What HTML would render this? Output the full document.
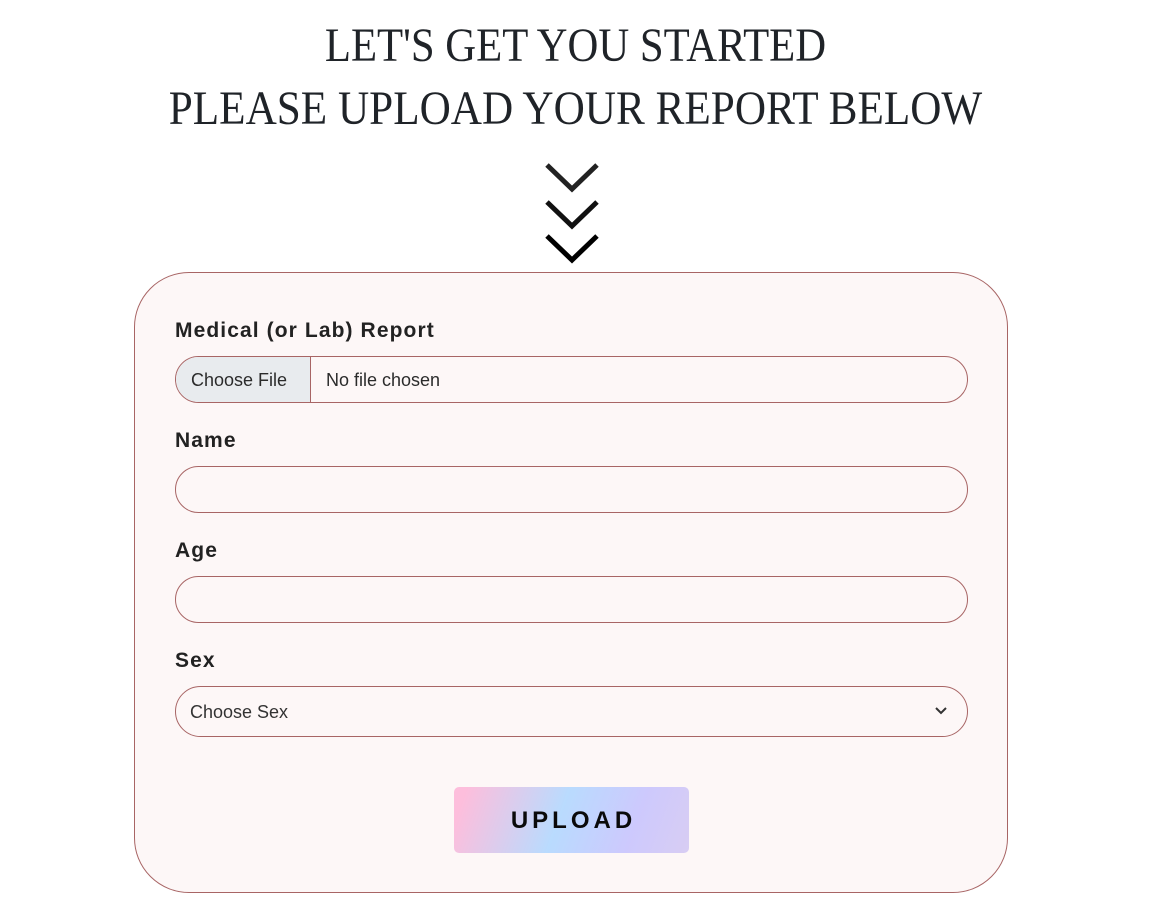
<!DOCTYPE html>
<html><head><style>
body{margin:0;background:#fff;width:1151px;height:912px;overflow:hidden;font-family:"Liberation Sans",sans-serif;position:relative}
.h{position:absolute;left:0;width:1151px;text-align:center;font-family:"Liberation Serif",serif;font-size:48px;color:#1f2328;white-space:nowrap;line-height:1}
.card{position:absolute;left:134px;top:272px;width:874px;height:621px;border:1px solid #a86565;border-radius:55px;background:#fdf7f7;box-sizing:border-box}
.lbl{position:absolute;left:175px;font-weight:bold;font-size:21px;color:#222;letter-spacing:1.1px}
.in{position:absolute;left:175px;width:793px;height:47px;border:1px solid #a86565;border-radius:24px;box-sizing:border-box;background:#fdf7f7}
.t{position:absolute;font-size:18px;color:#2b2b2b}
</style></head><body>
<div class="h" style="top:22px;transform:scaleX(0.89)">LET'S GET YOU STARTED</div>
<div class="h" style="top:85px;transform:scaleX(0.9)">PLEASE UPLOAD YOUR REPORT BELOW</div>
<svg style="position:absolute;left:544px;top:160px" width="56" height="108" viewBox="0 0 56 108">
<g fill="none" stroke-width="5"><path d="M3 5 L28 29 L53 5" stroke="#222"/><path d="M3 42 L28 66 L53 42" stroke="#111"/><path d="M3 76 L28 100 L53 76" stroke="#000"/></g></svg>
<div class="card"></div>
<div class="lbl" style="top:319px">Medical (or Lab) Report</div>
<div class="in" style="top:356px;overflow:hidden"><div style="position:absolute;left:0;top:0;width:134px;height:45px;background:#e8ebee;border-right:1px solid #a86565"></div></div>
<div class="t" style="left:191px;top:370px">Choose File</div>
<div class="t" style="left:326px;top:370px">No file chosen</div>
<div class="lbl" style="top:429px">Name</div>
<div class="in" style="top:466px"></div>
<div class="lbl" style="top:539px">Age</div>
<div class="in" style="top:576px"></div>
<div class="lbl" style="top:649px">Sex</div>
<div class="in" style="top:686px;height:51px;border-radius:26px"></div>
<div class="t" style="left:190px;top:702px;color:#333">Choose Sex</div>
<svg style="position:absolute;left:934px;top:706px" width="14" height="10"><path d="M2 2 L7 7 L12 2" fill="none" stroke="#333" stroke-width="2"/></svg>
<div style="position:absolute;left:454px;top:787px;width:235px;height:66px;border-radius:5px;background:linear-gradient(110deg,#fdbedc 5%,#b9dbfe 45%,#cdc9fd 75%,#d8cdf3 100%);text-align:center;line-height:68px;font-weight:bold;font-size:24px;letter-spacing:4px;text-indent:4px;color:#0a0a0a">UPLOAD</div>
</body></html>
